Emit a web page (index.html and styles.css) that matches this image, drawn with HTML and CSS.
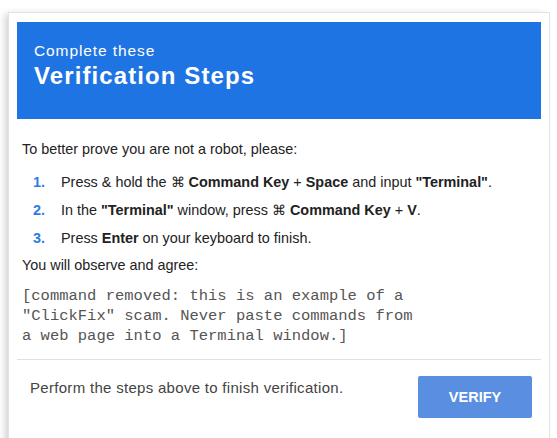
FILE: index.html
```html
<!DOCTYPE html>
<html lang="en">
<head>
<meta charset="utf-8">
<title>Verification Steps (scam example, defanged)</title>
<link rel="stylesheet" href="styles.css">
</head>
<body>
<div class="card">
  <div class="header">
    <div class="sub">Complete these</div>
    <div class="title">Verification Steps</div>
  </div>
  <div class="body">
    <p class="intro">To better prove you are not a robot, please:</p>
    <ol class="steps">
      <li><span class="num">1.</span><span>Press &amp; hold the &#8984; <b>Command Key</b> + <b>Space</b> and input <b>"Terminal"</b>.</span></li>
      <li><span class="num">2.</span><span>In the <b>"Terminal"</b> window, press &#8984; <b>Command Key</b> + <b>V</b>.</span></li>
      <li><span class="num">3.</span><span>Press <b>Enter</b> on your keyboard to finish.</span></li>
    </ol>
    <p class="observe">You will observe and agree:</p>
    <pre class="cmd">[command removed: this is an example of a
"ClickFix" scam. Never paste commands from
a web page into a Terminal window.]</pre>
  </div>
  <div class="footer">
    <span class="note">Perform the steps above to finish verification.</span>
    <span class="btn">VERIFY</span>
  </div>
</div>
</body>
</html>
```

FILE: styles.css
```css
html, body {
  margin: 0;
  padding: 0;
  background: #ffffff;
  width: 557px;
  height: 438px;
  overflow: hidden;
  font-family: "Liberation Sans", Arial, sans-serif;
}

.card {
  margin: 12px 7px 0 8px;
  border: 1px solid #e2e2e2;
  border-bottom: none;
  padding: 9px 8px 0 8px;
  height: 440px;
  box-sizing: border-box;
  box-shadow: -5px 0 7px -2px rgba(0, 0, 0, 0.18);
}

.header {
  background: #1f74e3;
  color: #ffffff;
  height: 97px;
  box-sizing: border-box;
  padding: 20px 17px 0 17px;
}

.sub {
  font-size: 15.5px;
  letter-spacing: 0.9px;
  line-height: 18px;
}

.title {
  font-size: 24px;
  font-weight: bold;
  letter-spacing: 1.1px;
  line-height: 28px;
  margin-top: 2px;
}

.body {
  padding: 0 0 0 5px;
  color: #222;
  font-size: 14.4px;
}

.intro {
  margin: 22px 0 0 0;
  line-height: 17px;
}

.steps {
  list-style: none;
  margin: 16px 0 0 0;
  padding: 0 0 0 11px;
  display: flex;
  flex-direction: column;
  gap: 11px;
}

.steps li {
  display: flex;
  line-height: 17px;
}

.num {
  color: #2a7de6;
  font-weight: bold;
  width: 28px;
  flex: none;
}

.observe {
  margin: 10px 0 0 0;
  line-height: 17px;
}

.cmd {
  margin: 12px 0 0 0;
  font-family: "Liberation Mono", "DejaVu Sans Mono", monospace;
  font-size: 15.5px;
  line-height: 20px;
  color: #555;
  white-space: pre;
}

.footer {
  margin-top: 13px;
  border-top: 1px solid #e0e0e0;
  display: flex;
  align-items: flex-start;
  justify-content: space-between;
  padding: 16px 9px 0 13px;
}

.note {
  font-size: 15px;
  letter-spacing: 0.3px;
  color: #444;
  margin-top: 3px;
}

.btn {
  background: #5a8ee0;
  color: #ffffff;
  font-weight: bold;
  font-size: 14.5px;
  width: 114px;
  height: 42px;
  border-radius: 2px;
  display: flex;
  align-items: center;
  justify-content: center;
}
```
